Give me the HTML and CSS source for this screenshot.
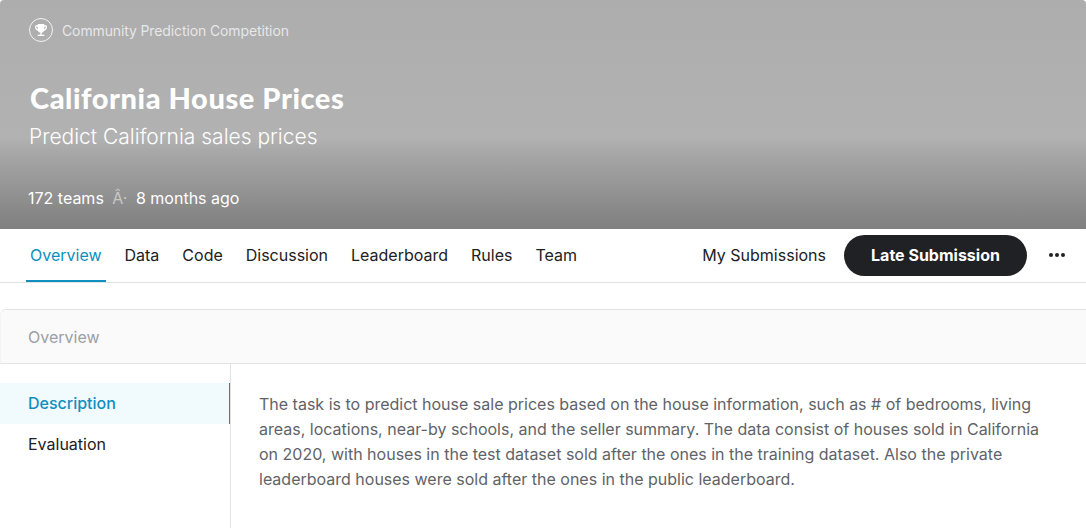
FILE: index.html
```html
<!DOCTYPE html>
<html lang="en">
<head>
    <meta charset="UTF-8">
    <title>California House Prices</title>
    <link rel="stylesheet" href="styles.css">
</head>
<body>
    <header class="banner">
        <div class="kind">
            <span class="kind-icon">
                <svg width="16" height="16" viewBox="0 0 24 24"><path fill="#fff" d="M19 5h-2V3H7v2H5c-1.1 0-2 .9-2 2v1c0 2.55 1.92 4.63 4.39 4.94.63 1.5 1.98 2.63 3.61 2.96V19H7v2h10v-2h-4v-3.1c1.63-.33 2.98-1.46 3.61-2.96C19.08 12.63 21 10.55 21 8V7c0-1.1-.9-2-2-2zM5 8V7h2v3.82C5.84 10.4 5 9.3 5 8zm14 0c0 1.3-.84 2.4-2 2.82V7h2v1z"/></svg>
            </span>
            <span>Community Prediction Competition</span>
        </div>
        <h1 class="title">California House Prices</h1>
        <p class="subtitle">Predict California sales prices</p>
        <p class="meta">172 teams <span class="sep">Â·</span> 8 months ago</p>
    </header>

    <nav class="tabs">
        <a class="tab active">Overview</a>
        <a class="tab">Data</a>
        <a class="tab">Code</a>
        <a class="tab">Discussion</a>
        <a class="tab">Leaderboard</a>
        <a class="tab">Rules</a>
        <a class="tab">Team</a>
        <a class="tab my-subs">My Submissions</a>
        <button class="late-btn">Late Submission</button>
        <span class="more"><i></i><i></i><i></i></span>
    </nav>

    <section class="panel">
        <div class="panel-head">Overview</div>
        <div class="panel-body">
            <ul class="side">
                <li class="side-item active">Description</li>
                <li class="side-item">Evaluation</li>
            </ul>
            <p class="desc">The task is to predict house sale prices based on the house information, such as # of bedrooms, living areas, locations, near-by schools, and the seller summary. The data consist of houses sold in California on 2020, with houses in the test dataset sold after the ones in the training dataset. Also the private leaderboard houses were sold after the ones in the public leaderboard.</p>
        </div>
    </section>
</body>
</html>
```
FILE: styles.css
```css
html, body {
    height: 528px;
    overflow: hidden;
}

body {
    margin: 0;
    font-family: Inter, "Liberation Sans", sans-serif;
    background-color: #fff;
    color: #202124;
}

.banner {
    height: 229px;
    box-sizing: border-box;
    padding: 17px 29px 0;
    background: linear-gradient(180deg, #adadad 0, #b2b2b2 60%, #a8a8a8 66%, #7f7f7f 100%);
    border-radius: 4px 4px 0 0;
    color: #fff;
}

.kind {
    display: flex;
    align-items: center;
    gap: 9px;
    height: 26px;
    font-size: 14px;
    letter-spacing: -0.12px;
    color: rgba(255, 255, 255, 0.72);
}

.kind-icon {
    width: 22px;
    height: 22px;
    border: 1.5px solid rgba(255, 255, 255, 0.85);
    border-radius: 50%;
    display: flex;
    align-items: center;
    justify-content: center;
}

.title {
    margin: 37px 0 0 1px;
    font-family: Lato, sans-serif;
    font-size: 29px;
    font-weight: 900;
    line-height: 36px;
    letter-spacing: 0.56px;
}

.subtitle {
    margin: 6px 0 0;
    font-size: 21px;
    font-weight: 300;
    line-height: 30px;
}

.meta {
    margin: 34px 0 0 -1px;
    font-size: 16px;
    line-height: 24px;
}

.sep {
    color: rgba(255, 255, 255, 0.5);
    margin: 0 4px;
}

.tabs {
    height: 54px;
    box-sizing: border-box;
    border-bottom: 1px solid #e3e3e3;
    display: flex;
    align-items: stretch;
    padding: 0 25px 0 26px;
}

.tab {
    font-size: 16px;
    line-height: 52px;
    padding: 0 4px;
    margin-right: 15px;
    height: 53px;
    box-sizing: border-box;
}

.tab.active {
    color: #0e8fc0;
    border-bottom: 2px solid #0e8fc0;
}

.my-subs {
    margin-left: auto;
    margin-right: 14px;
}

.late-btn {
    align-self: flex-start;
    margin-top: 6px;
    padding: 0 0 2px;
    width: 183px;
    height: 41px;
    border: none;
    border-radius: 21px;
    background-color: #202124;
    color: #fff;
    font-family: Inter, sans-serif;
    font-size: 16px;
    font-weight: 700;
}

.more {
    display: flex;
    align-items: center;
    gap: 2px;
    margin: -1px -4px 0 22px;
}

.more i {
    width: 4px;
    height: 4px;
    border-radius: 50%;
    background-color: #202124;
}

.panel {
    margin-top: 26px;
}

.panel-head {
    height: 55px;
    box-sizing: border-box;
    padding-left: 27px;
    line-height: 54px;
    font-size: 16px;
    color: #9aa0a6;
    background-color: #fafafa;
    border-top: 1px solid #e3e3e3;
    border-left: 1px solid #f3f3f3;
    border-bottom: 1px solid #e3e3e3;
    border-radius: 6px 0 0 0;
}

.panel-body {
    display: flex;
    height: 170px;
}

.side {
    width: 231px;
    box-sizing: border-box;
    margin: 0;
    padding: 19px 0 0;
    list-style: none;
    border-right: 1px solid #e3e3e3;
    flex-shrink: 0;
}

.side-item {
    height: 41px;
    line-height: 41px;
    padding-left: 28px;
    font-size: 16px;
}

.side-item.active {
    color: #0e8fc0;
    font-weight: 500;
    background-color: #f1fafd;
    box-shadow: inset -1px 0 0 #0e8fc0;
}

.desc {
    margin: 28px 40px 0 28px;
    font-size: 16px;
    line-height: 25px;
    color: #5f6368;
}
```
